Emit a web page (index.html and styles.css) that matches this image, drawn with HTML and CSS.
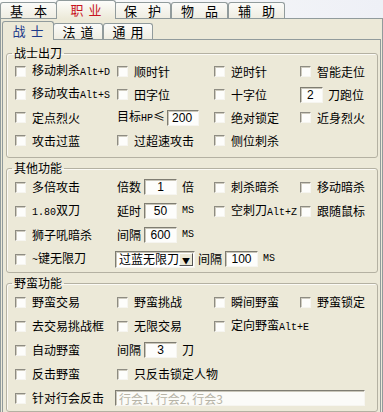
FILE: index.html
```html
<!DOCTYPE html>
<html lang="zh-CN">
<head>
    <meta charset="UTF-8">
    <title>职业设置</title>
    <link rel="stylesheet" href="styles.css">
</head>
<body>
    <div class="window">
        <div class="tabs top-tabs">
            <div class="tab wide">基 本</div>
            <div class="tab active">职 业</div>
            <div class="tab wide">保 护</div>
            <div class="tab wide">物 品</div>
            <div class="tab wide">辅 助</div>
        </div>

        <div class="panel outer">
            <div class="tabs sub-tabs">
                <div class="tab active">战 士</div>
                <div class="tab">法 道</div>
                <div class="tab">通 用</div>
            </div>

            <div class="panel inner">
                <!-- 战士出刀 -->
                <fieldset class="group group-1">
                    <legend>战士出刀</legend>
                    <div class="row">
                        <label class="chk"><input type="checkbox"><span>移动刺杀<span class="en">Alt+D</span></span></label>
                        <label class="chk"><input type="checkbox"><span>顺时针</span></label>
                        <label class="chk"><input type="checkbox"><span>逆时针</span></label>
                        <label class="chk"><input type="checkbox"><span>智能走位</span></label>
                    </div>
                    <div class="row">
                        <label class="chk"><input type="checkbox"><span>移动攻击<span class="en">Alt+S</span></span></label>
                        <label class="chk"><input type="checkbox"><span>田字位</span></label>
                        <label class="chk"><input type="checkbox"><span>十字位</span></label>
                        <div class="field"><input type="text" class="num left" value="2"><span>刀跑位</span></div>
                    </div>
                    <div class="row">
                        <label class="chk"><input type="checkbox"><span>定点烈火</span></label>
                        <div class="field"><span>目标<span class="en">HP</span>≤</span><input type="text" class="num hp" value="200"></div>
                        <label class="chk"><input type="checkbox"><span>绝对锁定</span></label>
                        <label class="chk"><input type="checkbox"><span>近身烈火</span></label>
                    </div>
                    <div class="row">
                        <label class="chk"><input type="checkbox"><span>攻击过蓝</span></label>
                        <label class="chk"><input type="checkbox"><span>过超速攻击</span></label>
                        <label class="chk"><input type="checkbox"><span>侧位刺杀</span></label>
                    </div>
                </fieldset>

                <!-- 其他功能 -->
                <fieldset class="group">
                    <legend>其他功能</legend>
                    <div class="row">
                        <label class="chk"><input type="checkbox"><span>多倍攻击</span></label>
                        <div class="field"><span>倍数</span><input type="text" class="num" value="1"><span>倍</span></div>
                        <label class="chk"><input type="checkbox"><span>刺杀暗杀</span></label>
                        <label class="chk"><input type="checkbox"><span>移动暗杀</span></label>
                    </div>
                    <div class="row">
                        <label class="chk"><input type="checkbox"><span><span class="en">1.80</span>双刀</span></label>
                        <div class="field"><span>延时</span><input type="text" class="num" value="50"><span class="en">MS</span></div>
                        <label class="chk"><input type="checkbox"><span>空刺刀<span class="en">Alt+Z</span></span></label>
                        <label class="chk"><input type="checkbox"><span>跟随鼠标</span></label>
                    </div>
                    <div class="row">
                        <label class="chk"><input type="checkbox"><span>狮子吼暗杀</span></label>
                        <div class="field"><span>间隔</span><input type="text" class="num" value="600"><span class="en">MS</span></div>
                    </div>
                    <div class="row">
                        <label class="chk"><input type="checkbox"><span><span class="en">~</span>键无限刀</span></label>
                        <div class="field span-3">
                            <div class="select"><span class="select-value">过蓝无限刀</span><span class="select-btn">▼</span></div>
                            <span>间隔</span><input type="text" class="num" value="100"><span class="en">MS</span>
                        </div>
                    </div>
                </fieldset>

                <!-- 野蛮功能 -->
                <fieldset class="group">
                    <legend>野蛮功能</legend>
                    <div class="row">
                        <label class="chk"><input type="checkbox"><span>野蛮交易</span></label>
                        <label class="chk"><input type="checkbox"><span>野蛮挑战</span></label>
                        <label class="chk"><input type="checkbox"><span>瞬间野蛮</span></label>
                        <label class="chk"><input type="checkbox"><span>野蛮锁定</span></label>
                    </div>
                    <div class="row">
                        <label class="chk"><input type="checkbox"><span>去交易挑战框</span></label>
                        <label class="chk"><input type="checkbox"><span>无限交易</span></label>
                        <label class="chk span-2"><input type="checkbox"><span>定向野蛮<span class="en">Alt+E</span></span></label>
                    </div>
                    <div class="row">
                        <label class="chk"><input type="checkbox"><span>自动野蛮</span></label>
                        <div class="field"><span>间隔</span><input type="text" class="num" value="3"><span>刀</span></div>
                    </div>
                    <div class="row">
                        <label class="chk"><input type="checkbox"><span>反击野蛮</span></label>
                        <label class="chk span-3"><input type="checkbox"><span>只反击锁定人物</span></label>
                    </div>
                    <div class="row">
                        <label class="chk"><input type="checkbox"><span>针对行会反击</span></label>
                        <div class="field span-3"><input type="text" class="guilds" value="行会1, 行会2, 行会3" disabled></div>
                    </div>
                </fieldset>
            </div>
        </div>
    </div>
</body>
</html>
```

FILE: styles.css
```css
:root {
    --face: #ece9d8;
    --tab-border: #919b9c;
    --frame: #b4b1a2;
    --field-dark: #7f7d72;
    --text: #000000;
}

* {
    margin: 0;
    padding: 0;
    box-sizing: border-box;
}

body {
    width: 383px;
    height: 412px;
    overflow: hidden;
    background: var(--face);
    color: var(--text);
    font-family: "Noto Sans CJK SC", "Noto Sans", sans-serif;
    font-size: 12px;
    line-height: 14px;
}

.en {
    font-family: "Liberation Mono", monospace;
    font-size: 10px;
}

/* Tabs */
.tabs {
    display: flex;
    align-items: flex-end;
}

.top-tabs {
    height: 18px;
    background: linear-gradient(to right, #fbfbfa, #eef0f6);
}

.tab {
    position: relative;
    height: 16px;
    width: 57px;
    display: flex;
    align-items: center;
    justify-content: center;
    font-size: 13px;
    line-height: 14px;
    word-spacing: 2px;
    white-space: nowrap;
    border: 1px solid var(--tab-border);
    border-bottom: none;
    border-radius: 3px 3px 0 0;
    background: linear-gradient(#fbfbf9, #efede2);
}

.tab.wide {
    word-spacing: 8px;
}

.top-tabs .tab.active {
    height: 19px;
    width: 60px;
    margin: 0 -2px -1px -1px;
    z-index: 1;
    color: #c8141e;
    background: linear-gradient(#fdfdfb, var(--face));
}

.sub-tabs {
    height: 18px;
    margin-top: 2px;
}

.sub-tabs .tab {
    width: 50px;
}

.sub-tabs .tab.active {
    width: 52px;
    height: 19px;
    margin: 0 -1px -1px 0;
    z-index: 1;
    color: #1c3a8a;
    background: var(--face);
}

/* Panels */
.panel {
    border: 1px solid var(--tab-border);
}

.outer {
    height: 395px;
    padding: 0 1px;
    border-bottom: none;
}

.inner {
    height: 380px;
    padding: 6px 2px 0 3px;
    border-bottom: none;
}

/* Group boxes */
.group {
    border: 1px solid var(--frame);
    border-radius: 3px;
    padding: 0 0 1px 8px;
    margin-top: 3px;
    box-shadow: inset 1px 1px 0 #fbfaf5;
}

.group-1 {
    margin-top: 0;
    padding-bottom: 5px;
}

.group legend {
    margin-left: -3px;
    padding: 0 2px;
    font-size: 12px;
    line-height: 14px;
}

.row {
    display: grid;
    grid-template-columns: 102px 97px 86px 1fr;
    align-items: center;
    height: 24px;
}

.group-1 .row {
    height: 23px;
}

.span-2 {
    grid-column: span 2;
}

.span-3 {
    grid-column: span 3;
}

/* Checkboxes */
.chk {
    display: flex;
    align-items: center;
    gap: 6px;
    white-space: nowrap;
}

.chk input {
    appearance: none;
    -webkit-appearance: none;
    width: 11px;
    height: 11px;
    background: #fdfdfb;
    border: 1px solid;
    border-color: #8e8c82 #f6f5f0 #f6f5f0 #8e8c82;
    box-shadow: inset 1px 1px 0 #cfccc0;
}

/* Fields */
.field {
    display: flex;
    align-items: center;
    white-space: nowrap;
}

.num {
    width: 33px;
    height: 16px;
    margin: 0 5px 0 3px;
    padding: 0 2px;
    font-family: "Liberation Sans", sans-serif;
    font-size: 12px;
    text-align: center;
    color: #000;
    background: #fdfdfb;
    border: 1px solid;
    border-color: var(--field-dark) #f6f5f0 #f6f5f0 var(--field-dark);
    box-shadow: inset 1px 1px 0 #c9c6b9;
    outline: none;
}

.num.left {
    width: 23px;
    margin-left: 0;
    text-align: left;
    padding-left: 6px;
}

.num.hp {
    width: 32px;
    margin: 0 0 0 2px;
    text-align: left;
    padding-left: 4px;
}

.select {
    display: flex;
    align-items: center;
    width: 80px;
    height: 17px;
    margin: 0 3px 0 -2px;
    background: #ffffff;
    border: 1px solid;
    border-color: var(--field-dark) #f6f5f0 #f6f5f0 var(--field-dark);
    box-shadow: inset 1px 1px 0 #c9c6b9;
}

.select-value {
    flex: 1;
    padding-left: 3px;
    font-size: 12px;
}

.select-btn {
    width: 14px;
    height: 13px;
    margin-right: 1px;
    font-size: 8px;
    line-height: 13px;
    text-align: center;
    background: var(--face);
    border: 1px solid;
    border-color: #fff #555 #555 #fff;
}

.guilds {
    width: 250px;
    height: 16px;
    margin-left: -2px;
    padding: 0 3px;
    font-family: "Noto Sans CJK SC", sans-serif;
    font-size: 12px;
    color: #b7b4a7;
    background: #fbfbf8;
    border: 1px solid;
    border-color: var(--field-dark) #f6f5f0 #f6f5f0 var(--field-dark);
    box-shadow: inset 1px 1px 0 #c9c6b9;
}
```
